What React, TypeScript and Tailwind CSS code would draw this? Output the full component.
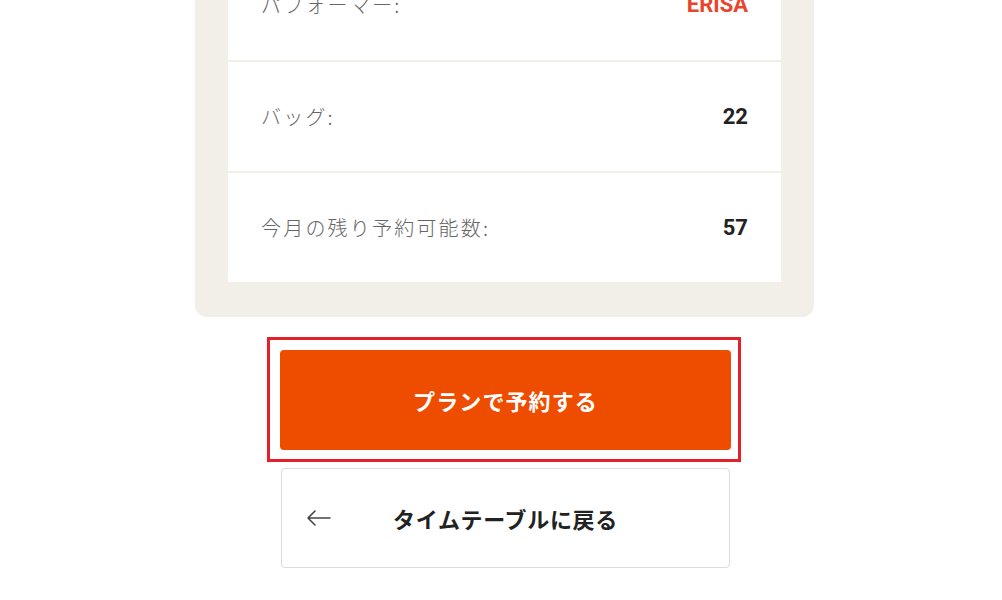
const rows = [
  { label: "パフォーマー:", value: "ERISA", accent: true },
  { label: "バッグ:", value: "22", accent: false },
  { label: "今月の残り予約可能数:", value: "57", accent: false },
];

const jp = "font-['Noto_Sans_CJK_JP',sans-serif]";

export default function App() {
  return (
    <div className="min-h-[600px] w-full overflow-hidden bg-white">
      <div className="ml-[195px] w-[619px]">
        <div className="mt-[-84px] rounded-b-[12px] bg-[#f2efe9] px-[33px] pt-[33px] pb-[35px]">
          <div className="bg-white">
            {rows.map((r, i) => (
              <div
                key={r.label}
                className={
                  "flex h-[111px] items-center justify-between px-[33px] " +
                  (i > 0 ? "border-t-2 border-[#f2efe9]" : "")
                }
              >
                <span className={`${jp} text-[20px] font-light tracking-[0.11em] text-[#666]`}>{r.label}</span>
                <span
                  className={
                    "font-['Roboto',sans-serif] text-[22px] font-bold " +
                    (r.accent ? "text-[#e8452c]" : "text-[#222]")
                  }
                >
                  {r.value}
                </span>
              </div>
            ))}
          </div>
        </div>

        <div className="mt-[20px] ml-[72px] w-[474px] border-[3px] border-[#e3212b] pt-[10px] pb-[9px] pl-[10px]">
          <button
            className={`${jp} flex h-[100px] w-[451px] items-center justify-center rounded-[4px] bg-[#ee4d00] text-[22px] font-bold tracking-[0.05em] text-white`}
          >
            プランで予約する
          </button>
        </div>

        <button
          className={`${jp} relative mt-[6px] ml-[86px] flex h-[100px] w-[449px] items-center justify-center rounded-[4px] border border-[#dcdcdc] bg-white text-[22px] font-bold tracking-[0.03em] text-[#222]`}
        >
          <svg
            className="absolute left-[24px] top-1/2 -translate-y-1/2"
            width="26"
            height="18"
            viewBox="0 0 26 18"
            fill="none"
            stroke="#444"
            strokeWidth="1.6"
            strokeLinecap="round"
            strokeLinejoin="round"
          >
            <path d="M24 9H2M9 2L2 9l7 7" />
          </svg>
          タイムテーブルに戻る
        </button>
      </div>
    </div>
  );
}
